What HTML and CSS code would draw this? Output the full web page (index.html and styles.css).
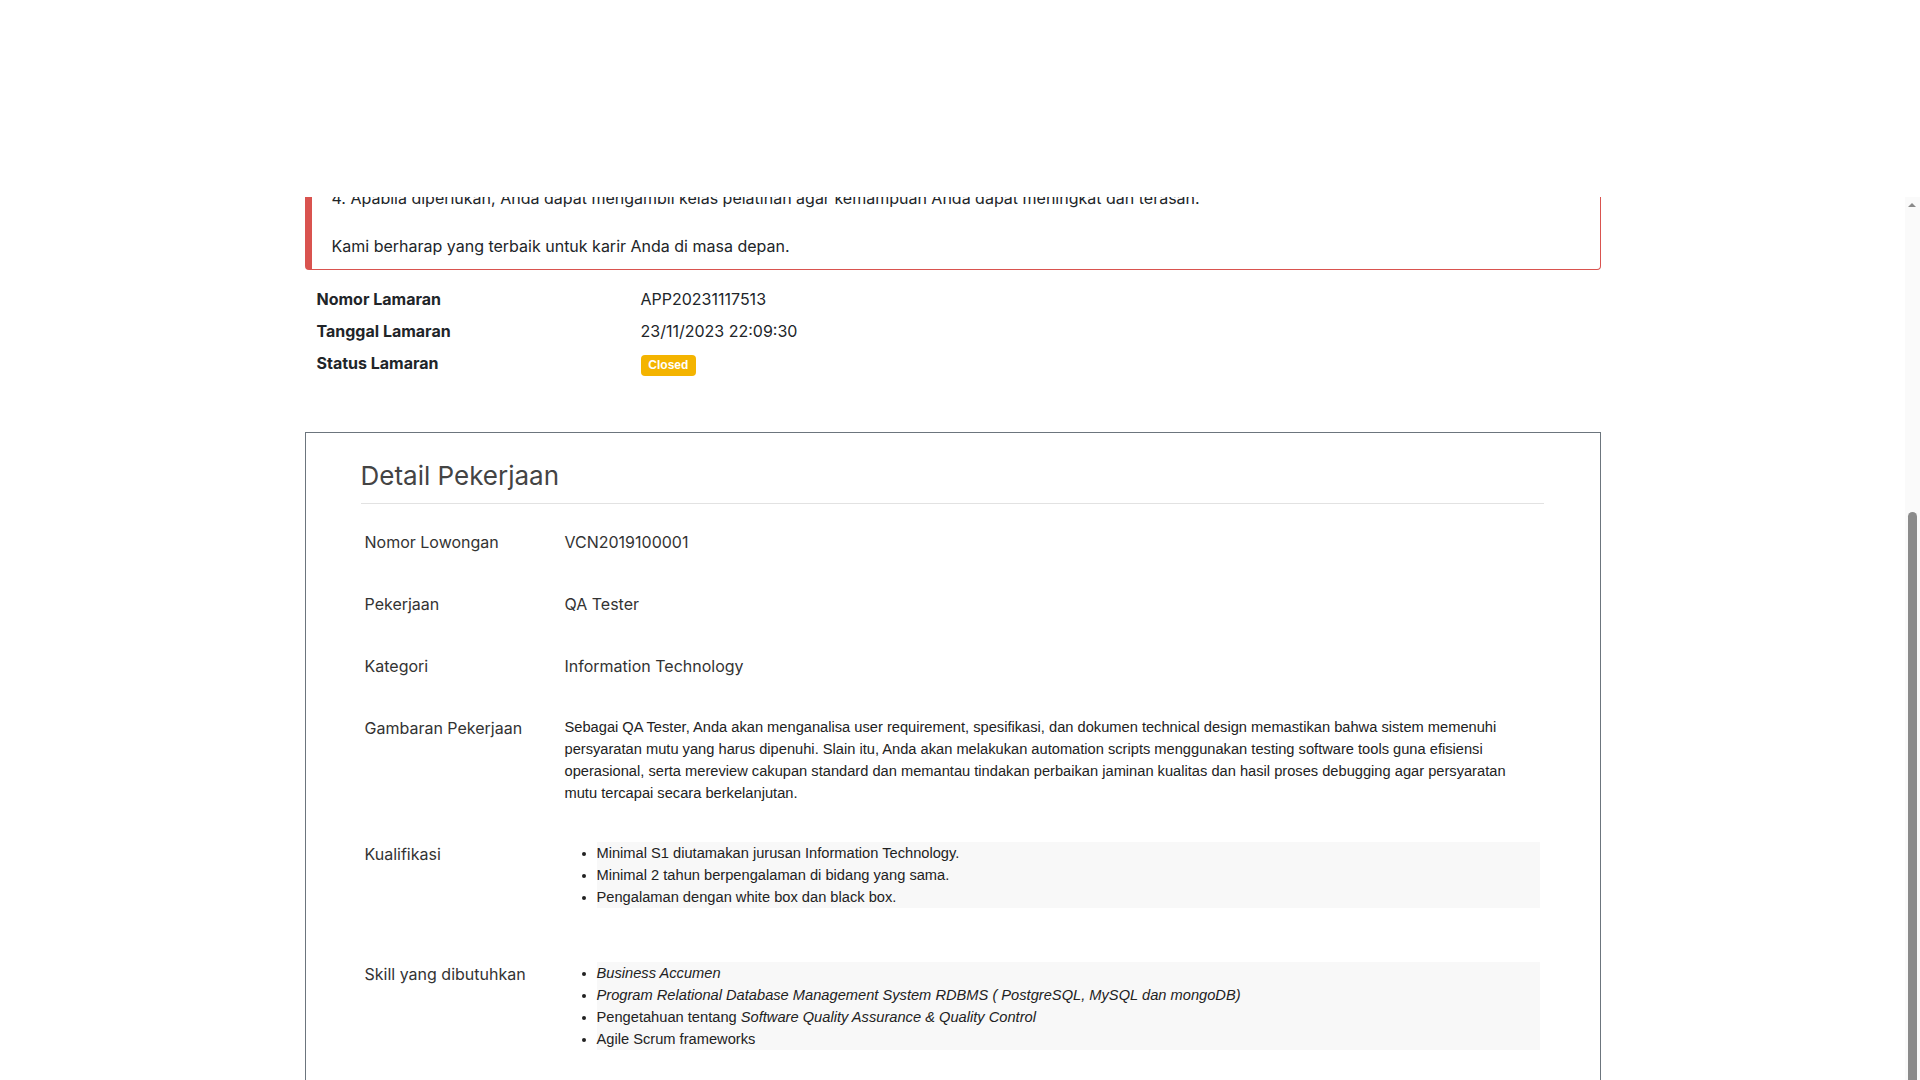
FILE: index.html
```html
<!DOCTYPE html>
<html lang="id">
<head>
<meta charset="utf-8">
<title>Detail Lamaran</title>
<link rel="stylesheet" href="styles.css">
</head>
<body>
<header class="topbar"></header>
<div class="viewport">
  <main class="scroller" id="scroller">
    <div class="container">
      <div class="page-head">
        <h2 class="page-title">Detail Lamaran</h2>
      </div>

      <div class="alert" id="alertBox">
        <p><strong>Mohon maaf, lamaran Anda belum dapat kami lanjutkan ke tahap berikutnya.</strong></p>
        <p>1. Perbarui CV Anda secara berkala dengan pengalaman dan keahlian terbaru.<br>
        2. Lengkapi portofolio yang relevan dengan posisi yang Anda lamar.<br>
        3. Ikuti sertifikasi yang mendukung bidang keahlian Anda.<br>
        4. Apabila diperlukan, Anda dapat mengambil kelas pelatihan agar kemampuan Anda dapat meningkat dan terasah.</p>
        <p>Kami berharap yang terbaik untuk karir Anda di masa depan.</p>
      </div>

      <div class="apply-info">
        <div class="info-row">
          <div class="info-label">Nomor Lamaran</div>
          <div class="info-value">APP20231117513</div>
        </div>
        <div class="info-row">
          <div class="info-label">Tanggal Lamaran</div>
          <div class="info-value">23/11/2023 22:09:30</div>
        </div>
        <div class="info-row">
          <div class="info-label">Status Lamaran</div>
          <div class="info-value"><span class="badge">Closed</span></div>
        </div>
      </div>

      <section class="job-card">
        <h3 class="job-title">Detail Pekerjaan</h3>
        <div class="job-table">
          <div class="job-row">
            <div class="job-label">Nomor Lowongan</div>
            <div class="job-value">VCN2019100001</div>
          </div>
          <div class="job-row">
            <div class="job-label">Pekerjaan</div>
            <div class="job-value">QA Tester</div>
          </div>
          <div class="job-row">
            <div class="job-label">Kategori</div>
            <div class="job-value">Information Technology</div>
          </div>
          <div class="job-row">
            <div class="job-label">Gambaran Pekerjaan</div>
            <div class="job-value rich">Sebagai QA Tester, Anda akan menganalisa user requirement, spesifikasi, dan dokumen technical design memastikan bahwa sistem memenuhi persyaratan mutu yang harus dipenuhi. Slain itu, Anda akan melakukan automation scripts menggunakan testing software tools guna efisiensi operasional, serta mereview cakupan standard dan memantau tindakan perbaikan jaminan kualitas dan hasil proses debugging agar persyaratan mutu tercapai secara berkelanjutan.</div>
          </div>
          <div class="job-row">
            <div class="job-label">Kualifikasi</div>
            <div class="job-value rich">
              <ul class="rich-list">
                <li>Minimal S1 diutamakan jurusan Information Technology.</li>
                <li>Minimal 2 tahun berpengalaman di bidang yang sama.</li>
                <li>Pengalaman dengan white box dan black box.</li>
              </ul>
            </div>
          </div>
          <div class="job-row">
            <div class="job-label">Skill yang dibutuhkan</div>
            <div class="job-value rich">
              <ul class="rich-list">
                <li><em>Business Accumen</em></li>
                <li><em>Program Relational Database Management System RDBMS ( PostgreSQL, MySQL dan mongoDB)</em></li>
                <li>Pengetahuan tentang <em>Software Quality Assurance &amp; Quality Control</em></li>
                <li>Agile Scrum frameworks</li>
              </ul>
            </div>
          </div>
        </div>
      </section>
    </div>
  </main>
  <div class="rail" aria-hidden="true">
    <div class="rail-btn"><span class="rail-arrow"></span></div>
    <div class="rail-thumb"></div>
  </div>
</div>
<script src="script.js"></script>
</body>
</html>
```

FILE: styles.css
```css
html, body {
  margin: 0;
  height: 100%;
  overflow: hidden;
  background: #fff;
}

body {
  font-family: Inter, "Noto Sans", "Liberation Sans", sans-serif;
  font-size: 16px;
  line-height: 1.5;
  color: #212529;
}

*, *::before, *::after {
  box-sizing: border-box;
}

.topbar {
  height: 197px;
  background: #fff;
}

.viewport {
  display: flex;
  height: calc(100vh - 197px);
}

.scroller {
  flex: 1;
  min-width: 0;
  overflow: hidden;
}

.rail {
  width: 15px;
  flex-shrink: 0;
  background: #fafafa;
  display: flex;
  flex-direction: column;
  align-items: center;
}

.rail-btn {
  height: 15px;
  width: 15px;
  display: flex;
  align-items: center;
  justify-content: center;
}

.rail-arrow {
  width: 0;
  height: 0;
  border-left: 4px solid transparent;
  border-right: 4px solid transparent;
  border-bottom: 4px solid #8a8a8a;
  margin-left: -1px;
}

.rail-thumb {
  margin-top: 300px;
  width: 9px;
  flex: 1;
  background: #8b8b8b;
  border-radius: 5px 5px 0 0;
}

.container {
  max-width: 1320px;
  margin: 0 auto;
  padding: 0 12px;
}

.page-head {
  padding-top: 40px;
  margin-bottom: 32px;
}

.page-title {
  margin: 0;
  font-size: 32px;
  font-weight: 500;
  line-height: 1.2;
}

.alert {
  border: 1px solid #d9534f;
  border-left: 7px solid #d9534f;
  border-radius: 4px;
  padding: 12px 20px 11px 20px;
  background: #fff;
}

.alert p {
  margin: 0 0 24px;
}

.alert p:last-child {
  margin-bottom: 0;
}

.apply-info {
  margin-top: 13px;
}

.info-row {
  display: grid;
  grid-template-columns: 25% 75%;
}

.info-label,
.info-value {
  padding: 4px 12px;
  line-height: 24px;
}

.info-label {
  font-weight: 700;
}

.badge {
  display: inline-block;
  font-family: "Liberation Sans", Arial, sans-serif;
  font-size: 12px;
  font-weight: 700;
  line-height: 1;
  color: #fff;
  background: #f4b400;
  padding: 4.2px 7.8px;
  border-radius: 4px;
  vertical-align: baseline;
}

.job-card {
  margin-top: 52px;
  border: 1px solid #6c757d;
  padding: 26px 56px 30px 55px;
}

.job-title {
  margin: 0;
  font-size: 26px;
  font-weight: 400;
  line-height: 34px;
  color: #444;
  padding-bottom: 10px;
  border-bottom: 1px solid #e2e2e2;
}

.job-table {
  margin-top: 26px;
}

.job-row {
  display: flex;
  margin-bottom: 38px;
}

.job-label {
  width: 200px;
  flex-shrink: 0;
  padding: 0 4px;
  line-height: 24px;
  color: #333;
}

.job-value {
  flex: 1;
  min-width: 0;
  padding: 0 4px;
  line-height: 24px;
  color: #333;
}

.rich {
  font-family: "Liberation Sans", Arial, sans-serif;
  font-size: 14.667px;
  line-height: 22px;
  color: #222;
}

.rich-list {
  margin: 0 0 16px;
  padding-left: 32px;
}

.rich-list li {
  background: #f8f8f8;
}
```

FILE: script.js
```javascript
(function () {
  function fit() {
    var sc = document.getElementById('scroller');
    var box = document.getElementById('alertBox');
    sc.scrollTop = 0;
    var a = box.getBoundingClientRect();
    var s = sc.getBoundingClientRect();
    sc.scrollTop = Math.round(a.bottom - s.top - 73);
  }
  fit();
  window.addEventListener('load', fit);
  if (document.fonts && document.fonts.ready) {
    document.fonts.ready.then(fit);
  }
})();
```
